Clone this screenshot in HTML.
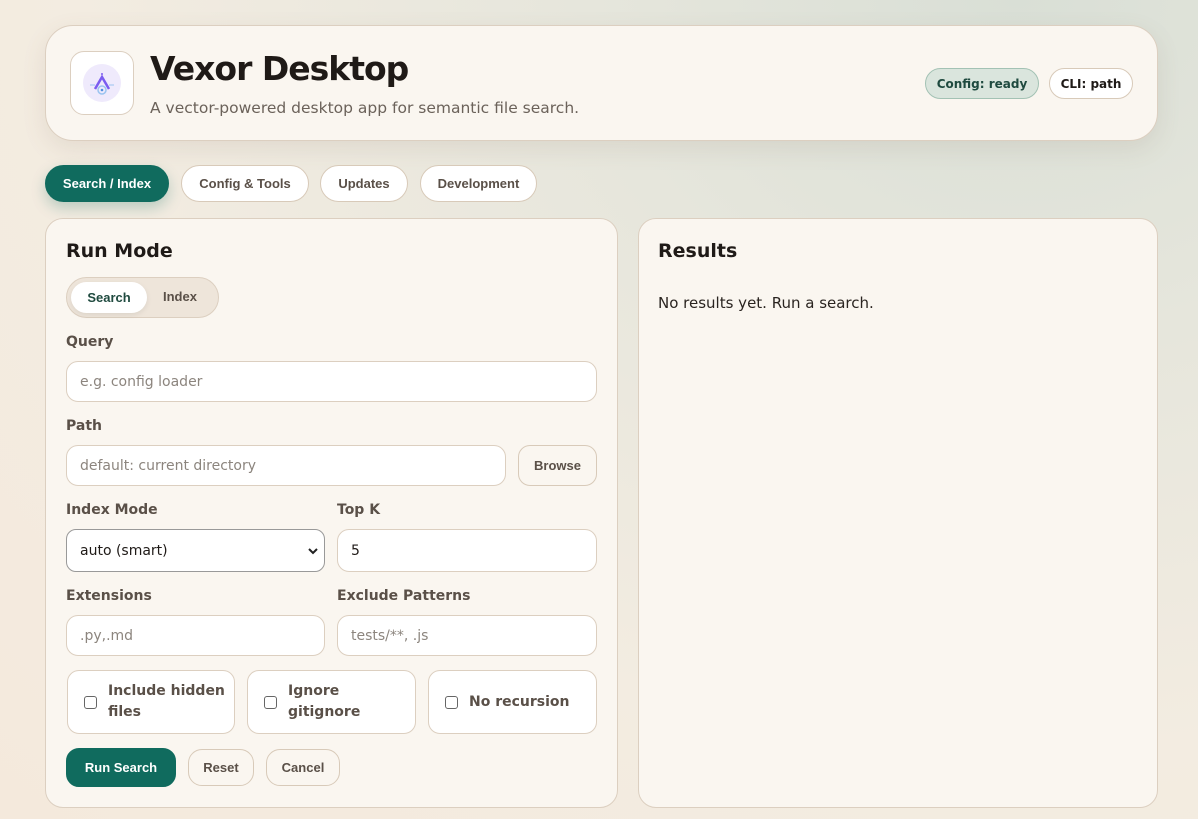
<!DOCTYPE html>
<html><head><style>
*{box-sizing:border-box;margin:0;padding:0}
body{width:1198px;height:819px;overflow:hidden;font-family:"DejaVu Sans","Liberation Sans",sans-serif;background:radial-gradient(ellipse at 85% 0%,#d9dfd6 0%,#e6e6dc 30%,#f3ece1 65%,#f4e9dc 100%);position:relative;color:#1f1a17}
.abs{position:absolute}
.card{position:absolute;background:#faf6f0;border:1px solid #dccfc0}
.lbl{position:absolute;font-size:14px;font-weight:bold;color:#5a5048}
.inp{position:absolute;background:#fff;border:1px solid #dccfc0;border-radius:12px;font-size:14px;color:#8c857e;padding-left:13px;display:flex;align-items:center}
.btn{position:absolute;border:1px solid #d8cab9;border-radius:20px;background:#fff;font-family:"Liberation Sans",sans-serif;font-weight:bold;font-size:13px;color:#5a5048;display:flex;align-items:center;justify-content:center}
.cb{position:absolute;background:#fff;border:1px solid #dccfc0;border-radius:12px;display:flex;align-items:center;padding-left:16px;font-size:14px;font-weight:bold;color:#5a5048;line-height:21px}
.box{width:13px;height:13px;border:1px solid #666;border-radius:3px;margin-right:11px;flex:none}
</style></head><body>
<div class="card" style="left:45px;top:25px;width:1113px;height:116px;border-radius:28px;box-shadow:0 8px 24px rgba(120,100,80,.12)"></div>
<div class="abs" style="left:70px;top:51px;width:64px;height:64px;background:#fff;border:1px solid #dccfc0;border-radius:14px">
<svg width="62" height="62" viewBox="0 0 62 62"><circle cx="31" cy="31" r="19" fill="#efeafc"/><path d="M24 37 L31 25 L38 37" stroke="#7b5cf0" stroke-width="2.5" fill="none"/><circle cx="31" cy="22" r="1" fill="#7b5cf0"/><circle cx="31" cy="38" r="4" fill="none" stroke="#9bc4f0" stroke-width="1.5"/><circle cx="31" cy="38" r="1.3" fill="#4d90e0"/><path d="M19 33h5M38 33h5" stroke="#9bc4f0" stroke-width="1"/></svg></div>
<div class="abs" style="left:150px;top:49px;font-size:33px;font-weight:bold;letter-spacing:-1px;color:#1f1a17">Vexor Desktop</div>
<div class="abs" style="left:150px;top:99px;font-size:15.5px;color:#6b625a">A vector-powered desktop app for semantic file search.</div>
<div class="abs" style="left:925px;top:68px;width:114px;height:31px;border-radius:16px;background:#dae5dd;border:1px solid #a3c2b4;font-size:12px;font-weight:bold;color:#1f4a3f;display:flex;align-items:center;justify-content:center">Config: ready</div>
<div class="abs" style="left:1049px;top:68px;width:84px;height:31px;border-radius:16px;background:#fff;border:1px solid #d8cab9;font-size:12px;font-weight:bold;color:#1f1a17;display:flex;align-items:center;justify-content:center">CLI: path</div>

<div class="btn" style="left:45px;top:165px;width:124px;height:37px;background:#106b5e;color:#fff;border-color:#106b5e;box-shadow:0 6px 14px rgba(16,107,94,.25)">Search / Index</div>
<div class="btn" style="left:181px;top:165px;width:128px;height:37px">Config &amp; Tools</div>
<div class="btn" style="left:320px;top:165px;width:88px;height:37px">Updates</div>
<div class="btn" style="left:420px;top:165px;width:117px;height:37px">Development</div>

<div class="card" style="left:45px;top:218px;width:573px;height:590px;border-radius:18px"></div>
<div class="card" style="left:638px;top:218px;width:520px;height:590px;border-radius:18px"></div>
<div class="abs" style="left:66px;top:240px;font-size:19px;font-weight:bold">Run Mode</div>
<div class="abs" style="left:658px;top:240px;font-size:19px;font-weight:bold">Results</div>
<div class="abs" style="left:658px;top:294px;font-size:15px;color:#2a2420">No results yet. Run a search.</div>

<div class="abs" style="left:66px;top:277px;width:153px;height:41px;border-radius:21px;background:#eee5da;border:1px solid #dccfc0"></div>
<div class="btn" style="left:71px;top:282px;width:76px;height:31px;border:none;color:#1f4a3f;box-shadow:0 2px 6px rgba(0,0,0,.08)">Search</div>
<div class="abs" style="left:163px;top:289px;font-family:'Liberation Sans',sans-serif;font-weight:bold;font-size:13px;color:#5a5048">Index</div>

<div class="lbl" style="left:66px;top:334px">Query</div>
<div class="inp" style="left:66px;top:361px;width:531px;height:41px">e.g. config loader</div>
<div class="lbl" style="left:66px;top:418px">Path</div>
<div class="inp" style="left:66px;top:445px;width:440px;height:41px">default: current directory</div>
<div class="btn" style="left:518px;top:445px;width:79px;height:41px;border-radius:12px;background:#faf6f0">Browse</div>
<div class="lbl" style="left:66px;top:502px">Index Mode</div>
<div class="lbl" style="left:337px;top:502px">Top K</div>
<div class="inp" style="left:66px;top:529px;width:259px;height:43px;color:#1f1a17;border-color:#999;border-radius:10px;justify-content:space-between;padding-right:6px">auto (smart)<svg width="10" height="8"><path d="M1 2l4 4 4-4" stroke="#222" stroke-width="2" fill="none"/></svg></div>
<div class="inp" style="left:337px;top:529px;width:260px;height:43px;color:#1f1a17">5</div>
<div class="lbl" style="left:66px;top:588px">Extensions</div>
<div class="lbl" style="left:337px;top:588px">Exclude Patterns</div>
<div class="inp" style="left:66px;top:615px;width:259px;height:41px">.py,.md</div>
<div class="inp" style="left:337px;top:615px;width:260px;height:41px">tests/**, .js</div>

<div class="cb" style="left:67px;top:670px;width:168px;height:64px"><span class="box"></span><span>Include hidden<br>files</span></div>
<div class="cb" style="left:247px;top:670px;width:169px;height:64px"><span class="box"></span><span>Ignore<br>gitignore</span></div>
<div class="cb" style="left:428px;top:670px;width:169px;height:64px"><span class="box"></span><span>No recursion</span></div>

<div class="btn" style="left:66px;top:748px;width:110px;height:39px;border-radius:13px;background:#106b5e;color:#fff;border-color:#106b5e">Run Search</div>
<div class="btn" style="left:188px;top:749px;width:66px;height:37px;border-radius:14px;background:#faf6f0">Reset</div>
<div class="btn" style="left:266px;top:749px;width:74px;height:37px;border-radius:14px;background:#faf6f0">Cancel</div>
</body></html>
